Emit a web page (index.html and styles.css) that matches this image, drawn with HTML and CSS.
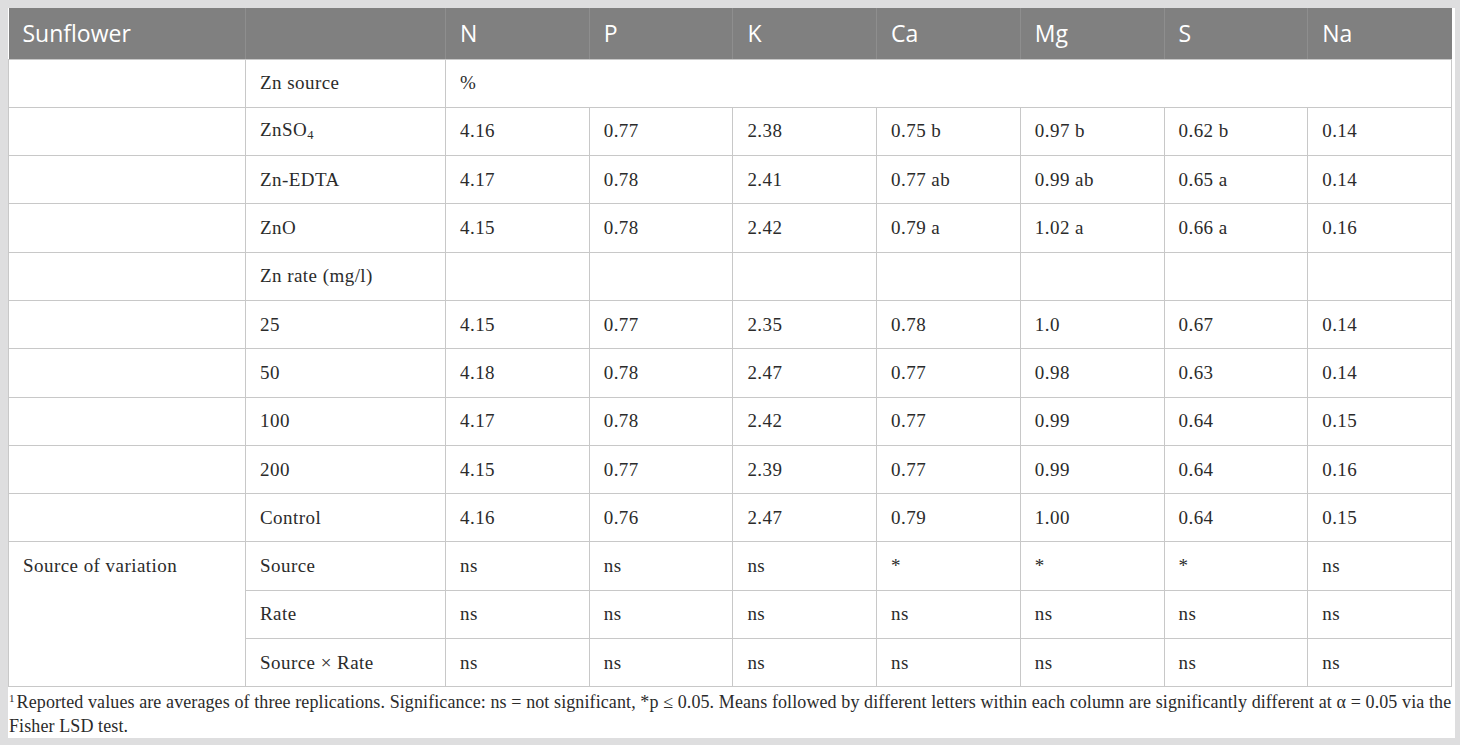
FILE: index.html
```html
<!DOCTYPE html>
<html lang="en">
<head>
  <meta charset="UTF-8">
  <title>Sunflower nutrient table</title>
  <link rel="stylesheet" href="styles.css">
</head>
<body>
  <div class="panel">
    <table class="data-table">
      <thead>
        <tr>
          <th class="col-crop">Sunflower</th>
          <th class="col-label"></th>
          <th>N</th>
          <th>P</th>
          <th>K</th>
          <th>Ca</th>
          <th>Mg</th>
          <th>S</th>
          <th>Na</th>
        </tr>
      </thead>
      <tbody>
        <tr>
          <td></td>
          <td>Zn source</td>
          <td colspan="7">%</td>
        </tr>
        <tr>
          <td></td>
          <td>ZnSO<sub>4</sub></td>
          <td>4.16</td><td>0.77</td><td>2.38</td><td>0.75 b</td><td>0.97 b</td><td>0.62 b</td><td>0.14</td>
        </tr>
        <tr>
          <td></td>
          <td>Zn-EDTA</td>
          <td>4.17</td><td>0.78</td><td>2.41</td><td>0.77 ab</td><td>0.99 ab</td><td>0.65 a</td><td>0.14</td>
        </tr>
        <tr>
          <td></td>
          <td>ZnO</td>
          <td>4.15</td><td>0.78</td><td>2.42</td><td>0.79 a</td><td>1.02 a</td><td>0.66 a</td><td>0.16</td>
        </tr>
        <tr>
          <td></td>
          <td>Zn rate (mg/l)</td>
          <td></td><td></td><td></td><td></td><td></td><td></td><td></td>
        </tr>
        <tr>
          <td></td>
          <td>25</td>
          <td>4.15</td><td>0.77</td><td>2.35</td><td>0.78</td><td>1.0</td><td>0.67</td><td>0.14</td>
        </tr>
        <tr>
          <td></td>
          <td>50</td>
          <td>4.18</td><td>0.78</td><td>2.47</td><td>0.77</td><td>0.98</td><td>0.63</td><td>0.14</td>
        </tr>
        <tr>
          <td></td>
          <td>100</td>
          <td>4.17</td><td>0.78</td><td>2.42</td><td>0.77</td><td>0.99</td><td>0.64</td><td>0.15</td>
        </tr>
        <tr>
          <td></td>
          <td>200</td>
          <td>4.15</td><td>0.77</td><td>2.39</td><td>0.77</td><td>0.99</td><td>0.64</td><td>0.16</td>
        </tr>
        <tr>
          <td></td>
          <td>Control</td>
          <td>4.16</td><td>0.76</td><td>2.47</td><td>0.79</td><td>1.00</td><td>0.64</td><td>0.15</td>
        </tr>
        <tr>
          <td rowspan="3" class="group-cell">Source of variation</td>
          <td>Source</td>
          <td>ns</td><td>ns</td><td>ns</td><td>*</td><td>*</td><td>*</td><td>ns</td>
        </tr>
        <tr>
          <td>Rate</td>
          <td>ns</td><td>ns</td><td>ns</td><td>ns</td><td>ns</td><td>ns</td><td>ns</td>
        </tr>
        <tr>
          <td>Source × Rate</td>
          <td>ns</td><td>ns</td><td>ns</td><td>ns</td><td>ns</td><td>ns</td><td>ns</td>
        </tr>
      </tbody>
    </table>
    <p class="footnote"><sup>1</sup>Reported values are averages of three replications. Significance: ns = not significant, *p ≤ 0.05. Means followed by different letters within each column are significantly different at α = 0.05 via the Fisher LSD test.</p>
  </div>
</body>
</html>
```

FILE: styles.css
```css
/* Base */
* {
  margin: 0;
  padding: 0;
  box-sizing: border-box;
}

html, body {
  height: 100%;
}

body {
  background-color: #dededf;
  padding: 8px 5px 8px 8px;
  font-family: "Liberation Serif", "Times New Roman", serif;
  color: #2b2b2b;
}

.panel {
  background-color: #ffffff;
  width: 1447px;
}

/* Table */
.data-table {
  width: 1444px;
  border-collapse: collapse;
  table-layout: fixed;
}

.data-table th {
  background-color: #808080;
  color: #ffffff;
  font-family: "Open Sans", "Liberation Sans", sans-serif;
  font-weight: 400;
  font-size: 23px;
  text-align: left;
  height: 51px;
  padding: 0 14px;
  border-right: 1px solid #8e8e8e;
  border-bottom: 1px solid #c8c8c8;
}

.data-table th:last-child {
  border-right: none;
}

.col-crop {
  width: 237px;
}

.col-label {
  width: 200px;
}

.data-table td {
  font-size: 19px;
  letter-spacing: 0.45px;
  height: 48.3px;
  padding: 0 14px;
  border: 1px solid #c8c8c8;
  vertical-align: middle;
  white-space: nowrap;
}

.data-table td sub {
  font-size: 12.5px;
  vertical-align: -3px;
}

.data-table .group-cell {
  vertical-align: top;
  padding-top: 13px;
}

/* Footnote */
.footnote {
  font-size: 18px;
  letter-spacing: 0.1px;
  line-height: 24px;
  padding: 3px 0 0 1px;
}

.footnote sup {
  font-size: 11px;
  line-height: 0;
  vertical-align: 6px;
  margin-right: 2px;
}
```
